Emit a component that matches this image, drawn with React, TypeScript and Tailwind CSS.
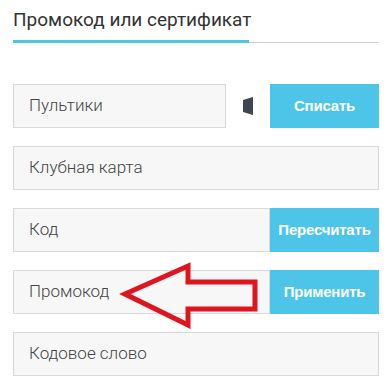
import React from "react";

function Field({ label, width }: { label: string; width: string }) {
  return (
    <div
      className={`${width} shrink-0 h-[44px] bg-[#f7f7f7] border border-[#d9d9d9] flex items-center pl-[15px] text-[17px] font-light text-[#444] [font-family:Roboto,'Liberation_Sans',sans-serif]`}
    >
      {label}
    </div>
  );
}

function Btn({ label }: { label: string }) {
  return (
    <div className="w-[109px] shrink-0 h-[44px] bg-[#4dc5e8] flex items-center justify-center text-white font-bold text-[15px] tracking-[-0.2px] [font-family:'Liberation_Sans',Arial,sans-serif]">
      {label}
    </div>
  );
}

export default function App() {
  return (
    <div className="relative w-[390px] h-[390px] bg-white overflow-hidden">
      <div className="pl-[13px] pt-[8px] w-[379px]">
        <div className="text-[19px] text-[#333] leading-[24px] [font-family:Roboto,'Liberation_Sans',sans-serif]">
          Промокод или сертификат
        </div>
        <div className="mt-[8px] relative h-[3px]">
          <div className="absolute left-0 right-0 bottom-[0px] h-px bg-[#d0d0d0]" />
          <div className="absolute left-0 top-0 w-[236px] h-[3px] bg-[#4dc5e8]" />
        </div>

        <div className="mt-[41px] flex flex-col gap-[18px]">
          <div className="flex items-center h-[44px]">
            <Field label="Пультики" width="w-[213px]" />
            <div className="w-[44px] shrink-0 flex justify-center">
              <svg width="11" height="18" viewBox="0 0 11 18">
                <polygon points="0,3 10,0 10,18 0,15" fill="#3f4650" />
              </svg>
            </div>
            <Btn label="Списать" />
          </div>
          <div className="flex">
            <Field label="Клубная карта" width="w-[366px]" />
          </div>
          <div className="flex">
            <Field label="Код" width="w-[257px]" />
            <Btn label="Пересчитать" />
          </div>
          <div className="flex">
            <Field label="Промокод" width="w-[257px]" />
            <Btn label="Применить" />
          </div>
          <div className="flex">
            <Field label="Кодовое слово" width="w-[366px]" />
          </div>
        </div>
      </div>

      <svg
        className="absolute left-0 top-0 pointer-events-none"
        width="390"
        height="390"
        viewBox="0 0 390 390"
      >
        <polygon
          points="125,294 188,266 188,282 255,282 255,309 188,309 188,325"
          fill="none"
          stroke="#e0141e"
          strokeWidth="5"
          strokeLinejoin="miter"
        />
      </svg>
    </div>
  );
}
